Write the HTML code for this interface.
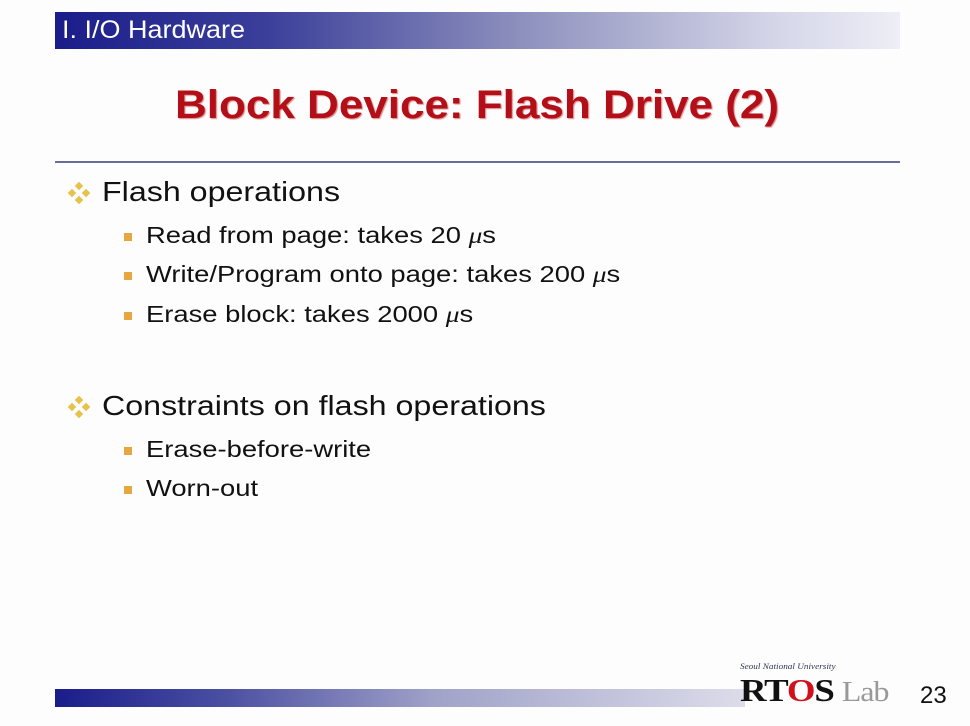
<!DOCTYPE html>
<html><head><meta charset="utf-8"><style>
body{margin:0;width:970px;height:726px;background:#fdfdfd;position:relative;overflow:hidden;font-family:"Liberation Sans",Arial,sans-serif}
.a{position:absolute;white-space:nowrap;transform-origin:0 0}
.bar{left:55px;top:12px;width:845px;height:37px;background:linear-gradient(90deg,#1a1d8a 0%,#3b3f9a 25%,#8d90bd 55%,#d4d5e8 85%,#eeeef6 100%)}
.l1{font-size:28px;color:#111;left:102px;transform:scaleX(1.15)}
.l2{font-size:23px;color:#111;left:146px;transform:scaleX(1.19)}
.d{position:absolute;left:68px;width:22px;height:22px}
.s{position:absolute;left:124px;width:8px;height:8px;background:#e8a640}
</style></head><body>
<div class="a bar"></div>
<div class="a" style="left:62px;top:16px;font-size:25px;color:#fff;transform:scaleX(1.08)">I. I/O Hardware</div>
<div class="a" style="left:175px;top:83px;font-size:40px;font-weight:bold;color:#b30f18;text-shadow:1px 1px 1px #d88;transform:scaleX(1.1)">Block Device: Flash Drive (2)</div>
<div class="a" style="left:55px;top:161px;width:845px;height:2px;background:#6a6c98"></div>

<svg class="d" style="top:182px" viewBox="0 0 22 22"><g fill="#e6c24a"><rect x="8" y="1" width="6" height="6" transform="rotate(45 11 4)"/><rect x="8" y="15" width="6" height="6" transform="rotate(45 11 18)"/><rect x="1" y="8" width="6" height="6" transform="rotate(45 4 11)"/><rect x="15" y="8" width="6" height="6" transform="rotate(45 18 11)"/></g></svg>
<div class="a l1" style="top:176px">Flash operations</div>
<div class="s" style="top:233px"></div><div class="a l2" style="top:222px">Read from page: takes 20 <i style="font-family:'Liberation Serif',serif">μ</i>s</div>
<div class="s" style="top:272px"></div><div class="a l2" style="top:261px">Write/Program onto page: takes 200 <i style="font-family:'Liberation Serif',serif">μ</i>s</div>
<div class="s" style="top:312px"></div><div class="a l2" style="top:301px">Erase block: takes 2000 <i style="font-family:'Liberation Serif',serif">μ</i>s</div>

<svg class="d" style="top:396px" viewBox="0 0 22 22"><g fill="#e6c24a"><rect x="8" y="1" width="6" height="6" transform="rotate(45 11 4)"/><rect x="8" y="15" width="6" height="6" transform="rotate(45 11 18)"/><rect x="1" y="8" width="6" height="6" transform="rotate(45 4 11)"/><rect x="15" y="8" width="6" height="6" transform="rotate(45 18 11)"/></g></svg>
<div class="a l1" style="top:390px">Constraints on flash operations</div>
<div class="s" style="top:447px"></div><div class="a l2" style="top:436px">Erase-before-write</div>
<div class="s" style="top:486px"></div><div class="a l2" style="top:475px">Worn-out</div>

<div class="a" style="left:55px;top:689px;width:690px;height:18px;background:linear-gradient(90deg,#1a1d8a 0%,#4c50a2 25%,#a0a2c8 55%,#dcdcea 100%)"></div>
<div class="a" style="left:740px;top:662px;font-size:8px;font-style:italic;color:#335;font-family:'Liberation Serif',serif;transform:scaleX(1.15)">Seoul National University</div>
<div class="a" style="left:740px;top:672px;font-size:32px;font-weight:bold;color:#111;font-family:'Liberation Serif',serif;letter-spacing:-1px;transform:scaleX(1.15)">RT<span style="color:#d0101a">O</span>S <span style="font-weight:normal;color:#999;font-size:28px">Lab</span></div>
<div class="a" style="left:920px;top:682px;font-size:24px;color:#111">23</div>
</body></html>
